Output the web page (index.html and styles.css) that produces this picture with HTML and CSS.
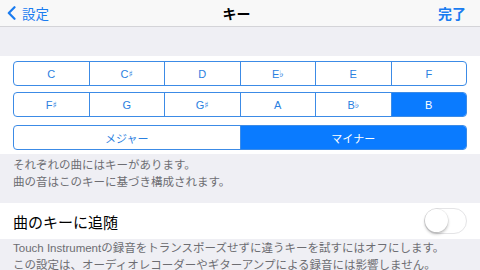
FILE: index.html
```html
<!DOCTYPE html>
<html lang="ja">
<head>
    <meta charset="UTF-8">
    <title>キー</title>
    <link rel="stylesheet" href="styles.css">
</head>
<body>
    <div class="nav">
        <div class="back">
            <svg width="9" height="14" viewBox="0 0 9 14"><path d="M7.5 1.2 L1.8 7 L7.5 12.8" fill="none" stroke="#1a7cf0" stroke-width="2.2" stroke-linecap="round" stroke-linejoin="round"/></svg>
            <span>設定</span>
        </div>
        <div class="title">キー</div>
        <div class="done">完了</div>
    </div>
    <div class="gap"></div>
    <div class="panel">
        <div class="seg">
            <div class="item">C</div>
            <div class="item">C<small>♯</small></div>
            <div class="item">D</div>
            <div class="item">E<small>♭</small></div>
            <div class="item">E</div>
            <div class="item">F</div>
        </div>
        <div class="seg">
            <div class="item">F<small>♯</small></div>
            <div class="item">G</div>
            <div class="item">G<small>♯</small></div>
            <div class="item">A</div>
            <div class="item">B<small>♭</small></div>
            <div class="item on">B</div>
        </div>
        <div class="seg mode">
            <div class="item">メジャー</div>
            <div class="item on">マイナー</div>
        </div>
    </div>
    <div class="note first">
        それぞれの曲にはキーがあります。<br>
        曲の音はこのキーに基づき構成されます。
    </div>
    <div class="row">
        <span>曲のキーに追随</span>
        <div class="toggle"><i></i></div>
    </div>
    <div class="note">
        Touch Instrumentの録音をトランスポーズせずに違うキーを試すにはオフにします。<br>
        この設定は、オーディオレコーダーやギターアンプによる録音には影響しません。
    </div>
</body>
</html>
```

FILE: styles.css
```css
*{
    margin: 0;
    padding: 0;
    box-sizing: border-box;
}
body{
    width: 480px;
    height: 270px;
    overflow: hidden;
    background-color: #efeff4;
    font-family: "Liberation Sans", "Noto Sans CJK JP", sans-serif;
}
.nav{
    height: 27px;
    background-color: #f8f8f8;
    border-bottom: 1px solid #d4d4d8;
    display: flex;
    align-items: center;
    justify-content: space-between;
    padding: 0 14px 0 7px;
}
.back{
    display: flex;
    align-items: center;
    gap: 6px;
    color: #1a7cf0;
    font-size: 13.5px;
    width: 80px;
}
.back svg{
    display: block;
}
.title{
    font-size: 14px;
    font-weight: bold;
    color: #000;
}
.done{
    width: 80px;
    text-align: right;
    font-size: 14px;
    font-weight: bold;
    color: #1a7cf0;
}
.gap{
    height: 29px;
}
.panel{
    background-color: #fff;
    padding: 5px 13px 4px;
    display: flex;
    flex-direction: column;
    gap: 6px;
}
.seg{
    height: 25px;
    display: flex;
    border: 1px solid #3c8be6;
    border-radius: 4px;
    overflow: hidden;
}
.seg.mode{
    margin-top: 2px;
}
.item{
    flex: 1;
    display: flex;
    align-items: center;
    justify-content: center;
    font-size: 11px;
    color: #2a80e0;
    border-left: 1px solid #3c8be6;
}
.item:first-child{
    border-left: none;
}
.item small{
    font-size: 9px;
    font-family: "DejaVu Sans", sans-serif;
}
.item.on{
    background-color: #0a7bff;
    color: #fff;
}
.note{
    font-size: 11.5px;
    line-height: 17px;
    color: #6d6d72;
    padding: 1px 13px 0;
}
.note.first{
    padding-top: 3px;
    height: 49px;
}
.row{
    height: 36px;
    background-color: #fff;
    display: flex;
    align-items: center;
    justify-content: space-between;
    padding: 0 13px;
    font-size: 15px;
    color: #000;
}
.toggle{
    width: 43px;
    height: 26px;
    border: 1.5px solid #e4e4e6;
    border-radius: 13px;
    position: relative;
}
.toggle i{
    position: absolute;
    left: 0;
    top: 0;
    width: 23px;
    height: 23px;
    border-radius: 50%;
    background-color: #fff;
    box-shadow: 0 2px 3px rgba(0,0,0,0.25), 0 0 0 0.5px rgba(0,0,0,0.08);
}
```
